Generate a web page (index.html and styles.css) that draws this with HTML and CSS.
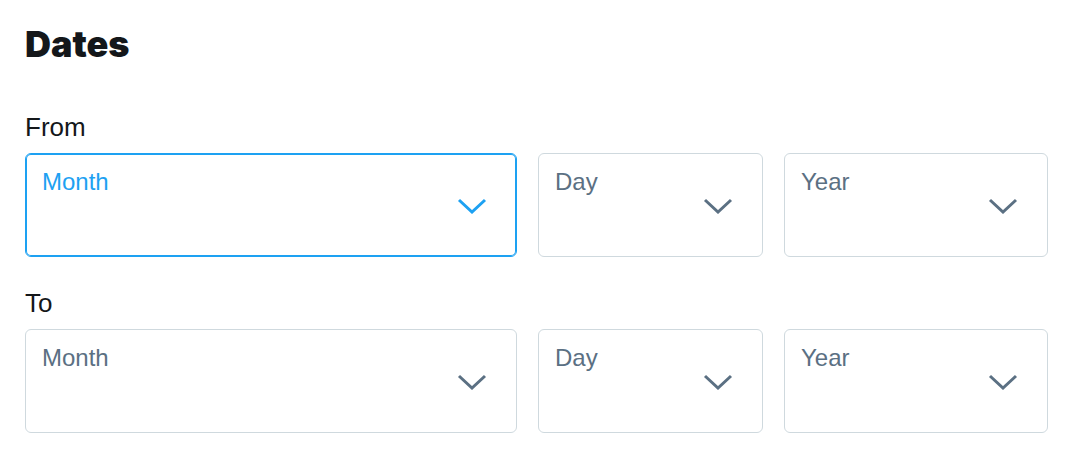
FILE: index.html
```html
<!DOCTYPE html>
<html lang="en">
<head>
    <meta charset="UTF-8">
    <title>Dates</title>
    <link rel="stylesheet" href="styles.css">
</head>
<body>
    <section class="dates">
        <h2 class="dates-title">Dates</h2>

        <div class="range">
            <div class="range-label">From</div>
            <div class="range-row">
                <div class="select focused">
                    <span class="select-label">Month</span>
                    <svg class="chevron" viewBox="0 0 30 16"><polyline points="2,2 15,14 28,2"/></svg>
                </div>
                <div class="select">
                    <span class="select-label">Day</span>
                    <svg class="chevron" viewBox="0 0 30 16"><polyline points="2,2 15,14 28,2"/></svg>
                </div>
                <div class="select">
                    <span class="select-label">Year</span>
                    <svg class="chevron" viewBox="0 0 30 16"><polyline points="2,2 15,14 28,2"/></svg>
                </div>
            </div>
        </div>

        <div class="range">
            <div class="range-label">To</div>
            <div class="range-row">
                <div class="select">
                    <span class="select-label">Month</span>
                    <svg class="chevron" viewBox="0 0 30 16"><polyline points="2,2 15,14 28,2"/></svg>
                </div>
                <div class="select">
                    <span class="select-label">Day</span>
                    <svg class="chevron" viewBox="0 0 30 16"><polyline points="2,2 15,14 28,2"/></svg>
                </div>
                <div class="select">
                    <span class="select-label">Year</span>
                    <svg class="chevron" viewBox="0 0 30 16"><polyline points="2,2 15,14 28,2"/></svg>
                </div>
            </div>
        </div>
    </section>
</body>
</html>
```

FILE: styles.css
```css
/* reset */
* {
    margin: 0;
    padding: 0;
    box-sizing: border-box;
}

body {
    background: #ffffff;
    font-family: 'Liberation Sans', Arial, sans-serif;
    color: #14171a;
}

/* panel */
.dates {
    padding: 23px 20px 0 25px;
}

.dates-title {
    font-family: Inter, 'Liberation Sans', sans-serif;
    font-size: 36px;
    line-height: 43px;
    font-weight: 900;
    color: #14171a;
    margin-bottom: 46px;
}

/* from / to block */
.range + .range {
    margin-top: 31px;
}

.range-label {
    font-size: 26px;
    line-height: 30px;
    color: #14171a;
    margin-bottom: 11px;
}

.range-row {
    display: grid;
    grid-template-columns: 492px 225px 264px;
    gap: 21px;
}

/* select box */
.select {
    position: relative;
    height: 104px;
    border: 1px solid #cfd9de;
    border-radius: 6px;
    padding: 14px 16px;
}

.select.focused {
    border-color: #1da1f2;
    box-shadow: inset 0 0 0 1px #1da1f2;
}

.select-label {
    font-size: 24px;
    line-height: 28px;
    color: #5b7083;
}

.focused .select-label {
    color: #1da1f2;
}

.chevron {
    position: absolute;
    right: 29px;
    top: 50%;
    width: 30px;
    height: 16px;
    margin-top: -7px;
    fill: none;
    stroke: #5b7083;
    stroke-width: 3;
}

.focused .chevron {
    stroke: #1da1f2;
}
```
